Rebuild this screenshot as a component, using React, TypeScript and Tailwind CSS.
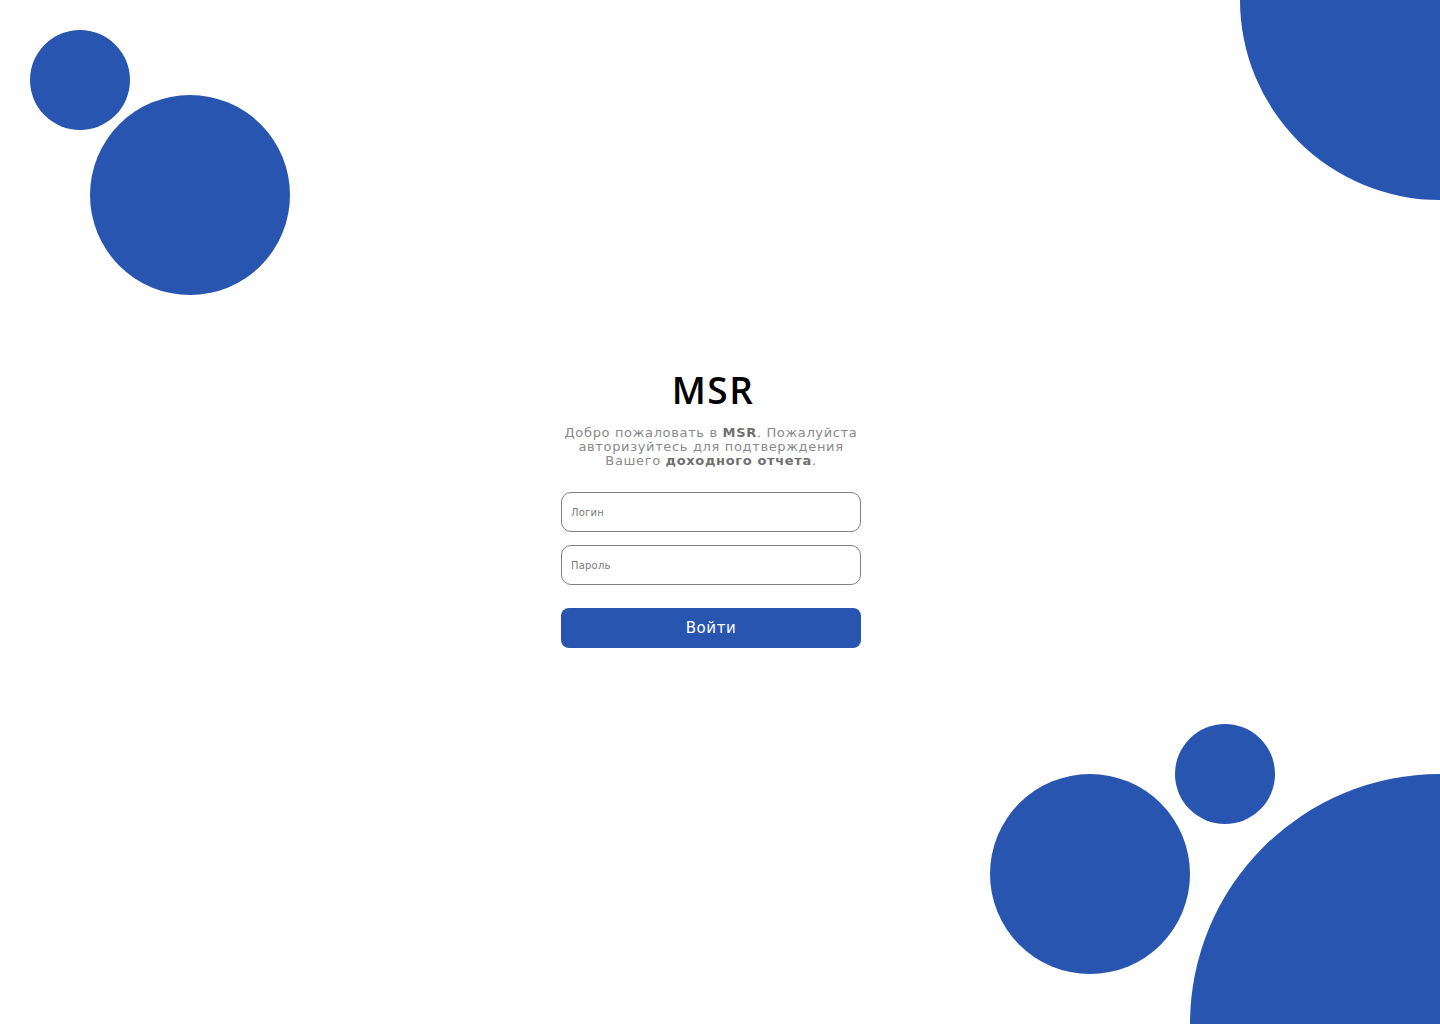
import { useState } from "react";

export default function App() {
  const [login, setLogin] = useState("");
  const [password, setPassword] = useState("");

  return (
    <div
      className="relative w-full h-screen overflow-hidden bg-white flex items-center justify-center"
      style={{ fontFamily: "'DejaVu Sans', 'Open Sans', sans-serif" }}
    >
      {/* decorative circles */}
      <div className="absolute left-[30px] top-[30px] w-[100px] h-[100px] rounded-full bg-[#2855af]" />
      <div className="absolute left-[90px] top-[95px] w-[200px] h-[200px] rounded-full bg-[#2855af]" />
      <div className="absolute left-[1240px] top-[-200px] w-[400px] h-[400px] rounded-full bg-[#2855af]" />
      <div className="absolute left-[1175px] top-[724px] w-[100px] h-[100px] rounded-full bg-[#2855af]" />
      <div className="absolute left-[990px] top-[774px] w-[200px] h-[200px] rounded-full bg-[#2855af]" />
      <div className="absolute left-[1190px] top-[774px] w-[500px] h-[500px] rounded-full bg-[#2855af]" />

      {/* login form */}
      <div className="relative w-[300px] mr-[18px] pb-[8px] flex flex-col items-center">
        <h1 className="ml-[4px] font-['Open_Sans',sans-serif] text-[37px] leading-[44px] font-semibold text-black tracking-[0.04em]">
          MSR
        </h1>
        <p className="mt-[14px] text-center text-[13px] leading-[14px] text-[#8a8a8a] tracking-[0.05em]">
          Добро пожаловать в <b className="font-semibold text-[#6f6f6f]">MSR</b>. Пожалуйста
          <br />
          авторизуйтесь для подтверждения
          <br />
          Вашего <b className="font-semibold text-[#6f6f6f]">доходного отчета</b>.
        </p>
        <input
          value={login}
          onChange={(e) => setLogin(e.target.value)}
          placeholder="Логин"
          className="mt-[24px] w-full h-[40px] rounded-[10px] border border-[#808080] px-[9px] text-[10px] tracking-[0.02em] outline-none placeholder:text-[#7a7a7a]"
        />
        <input
          type="password"
          value={password}
          onChange={(e) => setPassword(e.target.value)}
          placeholder="Пароль"
          className="mt-[13px] w-full h-[40px] rounded-[10px] border border-[#808080] px-[9px] text-[10px] tracking-[0.02em] outline-none placeholder:text-[#7a7a7a]"
        />
        <button className="mt-[23px] w-full h-[40px] rounded-[8px] bg-[#2855af] text-white text-[15px] tracking-[0.04em]">
          Войти
        </button>
      </div>
    </div>
  );
}
